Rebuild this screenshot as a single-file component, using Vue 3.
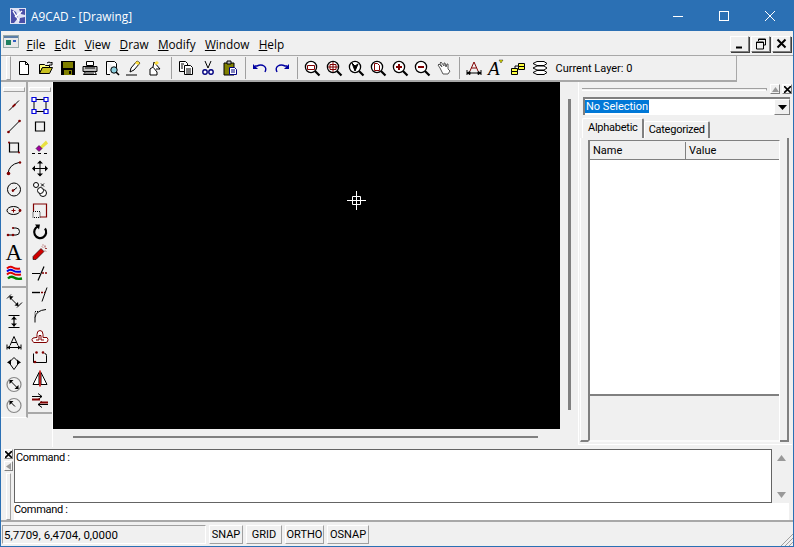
<script setup>
const R = '#800000'
const mag = (x = 7, y = 7) => `<circle cx="${x}" cy="${y}" r="5.6" fill="#fff" stroke="#000" stroke-width="1.3"/><path d="M${x + 4} ${y + 4}l4.5 4.5" stroke="#000" stroke-width="2.2"/>`

const topIcons = [
  [`<path d="M3.5 1.5h6l3 3v10h-9z" fill="#fff" stroke="#000"/><path d="M9.5 1.5v3h3" fill="none" stroke="#000"/>`, `<path d="M1.5 13.5v-9h5l1 1h4v2h-7z" fill="#ffff80" stroke="#000"/><path d="M1.5 13.5l3-6h10l-3 6z" fill="#c8c020" stroke="#000"/><path d="M9 3q2-2 4 0l1-1v3h-3" fill="none" stroke="#000"/>`, `<path d="M1 1h14v14H1z" fill="#000"/><path d="M3 2h10v6H3z" fill="#808000"/><path d="M4 10h8v5H4z" fill="#808000"/><path d="M9 11h2v3H9z" fill="#000"/>`, `<path d="M4.5 1.5h7v4h-7z" fill="#fff" stroke="#000"/><path d="M1 6.5h14v5H1z" fill="#c0c0c0" stroke="#000"/><path d="M3.5 11.5h9l2 3h-13z" fill="#fff" stroke="#000"/><path d="M3 8h10M3 13h9" stroke="#000"/>`, `<path d="M2.5 1.5h8l2 2v5M6 14.5H2.5v-13" fill="#fff" stroke="#000"/><circle cx="10" cy="10" r="3.2" fill="#8cd0e0" stroke="#000"/><path d="M12 12l3 3" stroke="#000" stroke-width="1.6"/>`, `<path d="M0 15h11" stroke="#000"/><path d="M4 12l1-4 6-7 3 2-6 7z" fill="#fff" stroke="#000"/><path d="M9 3l3 2 2-2-3-2z" fill="#ffe040"/>`, `<path d="M2 15V9l3-2 4 5v3z" fill="#fff" stroke="#000"/><path d="M5 7l1-5 6 7-4 0" fill="#fff" stroke="#000"/><path d="M6 3l3-2 2 2-3 2z" fill="#ffe040"/>`],
  [`<path d="M1.5 1.5h6l2 2v8h-8z" fill="#fff" stroke="#000"/><path d="M6.5 5.5h6l2 2v7h-8z" fill="#fff" stroke="#000"/><path d="M3 4h3M3 6h2M3 8h2M8 9h5M8 11h5M8 13h5" stroke="#000"/>`, `<path d="M5 1l3 7M11 1L8 8" stroke="#000"/><circle cx="5" cy="12" r="2.2" fill="#fff" stroke="#000080" stroke-width="1.4"/><circle cx="11" cy="12" r="2.2" fill="#fff" stroke="#000080" stroke-width="1.4"/>`, `<path d="M2 3h10v12H2z" fill="#808000" stroke="#000"/><path d="M5 1h4v3H5z" fill="#c0c0c0" stroke="#000"/><path d="M7.5 7.5h5l2 2v5h-7z" fill="#fff" stroke="#000080"/><path d="M9 10h4M9 12h4" stroke="#000080"/>`],
  [`<path d="M3 6h2q4-2 7 0t1 6" fill="none" stroke="#0000a0" stroke-width="1.4"/><path d="M1 4v5h5z" fill="#0000a0"/>`, `<path d="M13 6h-2q-4-2-7 0t-1 6" fill="none" stroke="#0000a0" stroke-width="1.4"/><path d="M15 4v5h-5z" fill="#0000a0"/>`],
  [mag() + `<path d="M3.5 5.5h7v4h-7z" fill="none" stroke="${R}"/>`, mag() + `<path d="M7 2v10M2 7h10M4 4.5h6v5H4z" fill="none" stroke="${R}"/>`, mag() + `<path d="M4 3l3 8 3-7-3 2z" fill="#000" stroke="#000"/>`, mag() + `<path d="M4.5 3.5h3l2 2v5h-5z" fill="#fff" stroke="${R}"/>`, mag() + `<path d="M4 7h6M7 4v6" stroke="${R}" stroke-width="2"/>`, mag() + `<path d="M4 7h6" stroke="${R}" stroke-width="2"/>`, `<path d="M4 8L2 5l1-1 3 3-2-4 1-1 3 4V3l1 0 1 4 1-3 1 0 0 5 2 2-2 3H7z" fill="#fff" stroke="#555"/>`],
  [`<path d="M4 11L8 2l4 9M5.5 8h5" fill="none" stroke="${R}"/><path d="M1 10v5M15 10v5M1 13h14M1 13l3-1.5v3zM15 13l-3-1.5v3z" fill="#000" stroke="#000"/>`, `<text x="0" y="15" font-family="Liberation Serif" font-size="19" font-style="italic" fill="#000">A</text><path d="M11 0l4 0-2 3z" fill="#e0e000" stroke="#000" stroke-width=".4"/>`, `<path d="M1.5 8.5h6v3h-6zM1.5 11.5h6v3h-6zM8.5 3.5h6v3h-6zM8.5 6.5h6v3h-6z" fill="#ffff40" stroke="#000"/><path d="M5 8V6h3" fill="none" stroke="#000"/>`, `<path d="M1 3.5l4-2h7l3 2-3 2H5zM1 8l4-2h7l3 2-3 2H5zM1 12.5l4-2h7l3 2-3 2H5z" fill="#fff" stroke="#000"/>`]
]

const leftA = [
  `<path d="M3 13L13 3" stroke="#000"/><path d="M6 7h4v2H6z" transform="rotate(-45 8 8)" fill="${R}"/>`,
  `<path d="M2 14L14 2" stroke="#000"/><circle cx="2.5" cy="13.5" r="1.3" fill="${R}"/><circle cx="13.5" cy="2.5" r="1.3" fill="${R}"/>`,
  `<path d="M3.5 3.5h9v9h-9z" fill="none" stroke="#000" stroke-width="1.2"/><circle cx="3" cy="3" r="1" fill="${R}"/><circle cx="13" cy="13" r="1" fill="${R}"/>`,
  `<path d="M2 13Q3 4 13 2" fill="none" stroke="#000"/><circle cx="2.5" cy="13" r="1.8" fill="${R}"/><circle cx="14" cy="2" r="1.2" fill="${R}"/>`,
  `<circle cx="8" cy="8" r="6.5" fill="none" stroke="#000"/><path d="M6 10l5-4" stroke="#000"/><circle cx="7" cy="9" r="1.3" fill="${R}"/>`,
  `<ellipse cx="7.5" cy="8" rx="6.5" ry="4" fill="none" stroke="#000"/><path d="M7.5 6v4M5.5 8h4" stroke="${R}"/><circle cx="14" cy="8" r="1.4" fill="${R}"/>`,
  `<path d="M2 11.5h8a3.5 3.5 0 0 0 0-7H7" fill="none" stroke="#000"/><circle cx="2" cy="11.5" r="1.3" fill="${R}"/><circle cx="7" cy="11.5" r="1.3" fill="${R}"/><circle cx="7" cy="4.5" r="1.1" fill="${R}"/>`,
  `<text x="-0.5" y="15" font-family="Liberation Serif" font-size="23" fill="#000">A</text>`,
  `<path d="M1 3q3-3 6-1t7 1" fill="none" stroke="#e00000" stroke-width="2"/><path d="M1 6q3-3 6-1t8 1" fill="none" stroke="#0000e0" stroke-width="2"/><path d="M1 9q3-3 6-1t8 1" fill="none" stroke="#e00000" stroke-width="2"/><path d="M2 13q3-3 6-1t8 1" fill="none" stroke="#008000" stroke-width="2.4"/>`
]
const leftB = [
  `<path d="M1 6l4-4M11 15l5-5M4 5l8 8" stroke="#000"/><path d="M3.5 3.5l4 .5-3.5 3.5zM12.5 13.5l-4-.5 3.5-3.5z" fill="#000"/>`,
  `<path d="M2.5 2h11M2.5 14h11M8 3v10" stroke="#000" stroke-width="1.2"/><path d="M8 3l-3 3h6zM8 13l-3-3h6z" fill="#000"/>`,
  `<path d="M4 11L8 2l4 9M5.5 8h5" fill="none" stroke="#000"/><path d="M1 10v5M15 10v5M1 13h14" stroke="#000"/><path d="M1 13l3-2v4zM15 13l-3-2v4z" fill="#000"/>`,
  `<path d="M8 2L3 7l5 7 5-7z" fill="none" stroke="#000"/><path d="M1 7l4-3v5zM15 7l-4-3v5z" fill="#000"/>`,
  `<circle cx="8" cy="8" r="7" fill="none" stroke="#888" stroke-width="1.2"/><path d="M4 4l8 8" stroke="#000"/><path d="M3.5 3.5h4l-4 4zM12.5 12.5h-4l4-4z" fill="#000"/>`,
  `<circle cx="8" cy="8" r="7" fill="none" stroke="#888" stroke-width="1.2"/><path d="M4 4l5 5" stroke="#000"/><path d="M3.5 3.5h4l-4 4z" fill="#000"/>`
]
const rightCol = [
  `<path d="M2 2h12v12H2z" fill="none" stroke="#000"/><path d="M0 0h4v4H0zM12 0h4v4h-4zM0 12h4v4H0zM12 12h4v4h-4z" fill="#fff" stroke="#0000e0" stroke-width="1.2"/>`,
  `<path d="M3.5 3.5h9v9h-9z" fill="none" stroke="#000" stroke-width="1.2"/>`,
  `<path d="M7 8l7-7 2 3-7 6z" fill="#e8e040"/><path d="M4 9l3-3 3 3-3 3z" fill="#a000a0" stroke="#000" stroke-width=".5"/><path d="M0 14h3M6 14h3M12 14h3" stroke="#000"/>`,
  `<path d="M8 1v14M1 8h14" stroke="#000"/><path d="M8 0l-3 3h6zM8 16l-3-3h6zM0 8l3-3v6zM16 8l-3-3v6z" fill="#000"/>`,
  `<circle cx="4" cy="3.5" r="2.5" fill="#fff" stroke="#000"/><circle cx="11" cy="11.5" r="3.5" fill="#fff" stroke="#000"/><circle cx="8.5" cy="9" r="3" fill="#fff" stroke="#000"/><path d="M9 2l3 3M12 2L9 5" stroke="#000"/>`,
  `<path d="M1.5 9V1.5h13v13H8" fill="none" stroke="${R}" stroke-width="1.2"/><path d="M1 9h7v6H1z" fill="none" stroke="#000" stroke-dasharray="1 1"/>`,
  `<path d="M13 5a6 6 0 1 1-7-2" fill="none" stroke="#000" stroke-width="2.2"/><path d="M3 1l5 0-1 5z" fill="#000"/>`,
  `<path d="M1 15l0-3 8-8 3 3-8 8z" fill="#d00000" stroke="#000" stroke-width=".6"/><path d="M10 2l1 1M13 1v2M15 4h-2M14 7l-1-1M11 0v1" stroke="#a04040"/>`,
  `<path d="M0 8h8M12 1L6 15" stroke="#000" stroke-width="1.2"/><path d="M10 7.5h6" stroke="${R}" stroke-width="1.5" stroke-dasharray="2 1"/>`,
  `<path d="M0 6h8" stroke="#000" stroke-width="1.4"/><path d="M9 6h4" stroke="${R}" stroke-width="1.5" stroke-dasharray="2 1"/><path d="M15 1l-5 14" stroke="#000"/>`,
  `<path d="M3 15v-5Q4 3 14 2" fill="none" stroke="#000"/><path d="M3 10V4h3" fill="none" stroke="#000" stroke-dasharray="1 1"/>`,
  `<path d="M2 14h12q2 0 2-3t-4-2h-1V6q0-4-3-4t-3 4v3H4q-4 0-4 2t2 3z" fill="#fff" stroke="${R}"/><path d="M4 11.5h3V7h2v4.5h3" fill="none" stroke="${R}"/>`,
  `<path d="M1.5 4v9h13V6a2 2 0 0 0-2-2" fill="none" stroke="#000"/><circle cx="4.5" cy="3" r="1.3" fill="${R}"/><circle cx="11" cy="3" r="1.3" fill="${R}"/><circle cx="3" cy="12.5" r="1.3" fill="${R}"/>`,
  `<path d="M7 2L1 14h6zM9 2l6 12H9z" fill="#fff" stroke="#000"/><path d="M8 0v16" stroke="#c00000" stroke-width="1.6"/>`,
  `<path d="M0 5h10M6 2l4 3-4 3" fill="none" stroke="#000"/><path d="M0 8h8" stroke="${R}" stroke-width="2"/><path d="M6 13h10M10 10l-4 3 4 3" fill="none" stroke="#000"/><path d="M8 11h8" stroke="${R}" stroke-width="2"/>`
]

const menus = [
  ['F', 'ile'], ['E', 'dit'], ['V', 'iew'], ['D', 'raw'], ['M', 'odify'], ['W', 'indow'], ['H', 'elp']
]
const statusButtons = ['SNAP', 'GRID', 'ORTHO', 'OSNAP']
</script>

<template>
  <div class="window">
    <header class="titlebar">
      <svg class="app-icon" viewBox="0 0 16 16" width="16" height="16">
        <rect width="16" height="16" fill="#dfe3f4" />
        <path d="M1 1l5 3 2 6-4 5H1zM9 1h6v6l-4-1zM10 10l5-1v6H9z" fill="#4a4fa8" />
        <path d="M3 3l6 10M12 3L5 9" stroke="#fff" stroke-width="1.4" />
      </svg>
      <span class="title-text">A9CAD - [Drawing]</span>
      <div class="win-controls">
        <svg width="46" height="30" viewBox="0 0 46 30"><path d="M18 15.5h10" stroke="#fff" /></svg>
        <svg width="46" height="30" viewBox="0 0 46 30"><rect x="18.5" y="10.5" width="9" height="9" fill="none" stroke="#fff" /></svg>
        <svg width="46" height="30" viewBox="0 0 46 30"><path d="M18 10l10 10M28 10L18 20" stroke="#fff" /></svg>
      </div>
    </header>

    <nav class="menubar">
      <svg class="doc-icon" viewBox="0 0 16 13" width="16" height="13">
        <rect x=".5" y=".5" width="15" height="12" fill="#e8e8e8" stroke="#9aa" />
        <rect x="1" y="1" width="14" height="2" fill="#5c7fa8" />
        <rect x="3" y="5" width="5" height="5" fill="#208060" />
        <rect x="10" y="5" width="3" height="2" fill="#3060c0" />
      </svg>
      <span v-for="m in menus" :key="m[0]" class="menu-item"><u>{{ m[0] }}</u>{{ m[1] }}</span>
      <div class="mdi-buttons">
        <button class="mdi-btn"><svg width="10" height="10" viewBox="0 0 10 10"><path d="M1 8.5h6" stroke="#000" stroke-width="2" /></svg></button>
        <button class="mdi-btn"><svg width="12" height="12" viewBox="0 0 12 12"><path d="M3.5 3V1h7v6H8.5M1.5 4h7v7h-7z" fill="none" stroke="#000" /><path d="M3 1.5h8M1 4.5h8" stroke="#000" /></svg></button>
        <button class="mdi-btn"><svg width="11" height="11" viewBox="0 0 11 11"><path d="M1.5 1.5l8 8M9.5 1.5l-8 8" stroke="#000" stroke-width="2" /></svg></button>
      </div>
    </nav>

    <div class="toolbar">
      <span class="grip-v"></span>
      <template v-for="(group, i) in topIcons" :key="i">
        <span v-if="i > 0" class="tb-sep"></span>
        <svg v-for="(icon, j) in group" :key="j" class="tb-icon" viewBox="0 0 16 16" width="16" height="16" v-html="icon"></svg>
      </template>
      <span class="layer-label">Current Layer: 0</span>
    </div>

    <div class="workspace">
      <aside class="side-a">
        <div class="grip-h"></div>
        <div class="side-list">
          <svg v-for="(icon, i) in leftA" :key="i" class="side-icon" viewBox="0 0 16 16" width="16" height="16" v-html="icon"></svg>
          <span class="side-sep"></span>
          <svg v-for="(icon, i) in leftB" :key="i" class="side-icon" viewBox="0 0 16 16" width="16" height="16" v-html="icon"></svg>
        </div>
      </aside>
      <aside class="side-b">
        <div class="grip-h"></div>
        <div class="side-list">
          <svg v-for="(icon, i) in rightCol" :key="i" class="side-icon" viewBox="0 0 16 16" width="16" height="16" v-html="icon"></svg>
          <span class="side-sep"></span>
        </div>
      </aside>

      <section class="view">
        <div class="view-top">
          <div class="canvas">
            <svg class="crosshair" width="19" height="19" viewBox="0 0 19 19">
              <path d="M9.5 0v19M0 9.5h19M5.5 5.5h8v8h-8z" fill="none" stroke="#fff" />
            </svg>
          </div>
          <div class="vscroll"><span class="vthumb"></span></div>
        </div>
        <div class="hscroll"><span class="hthumb"></span></div>
      </section>

      <aside class="props">
        <div class="props-head">
          <span class="props-grip"></span>
          <button class="mini-btn"><svg width="7" height="5" viewBox="0 0 7 5"><path d="M3.5 0L7 5H0z" fill="#999" /></svg></button>
          <button class="mini-btn"><svg width="7" height="7" viewBox="0 0 7 7"><path d="M0 0l7 7M7 0L0 7" stroke="#000" stroke-width="1.6" /></svg></button>
        </div>
        <div class="combo">
          <span class="combo-value">No Selection</span>
          <button class="combo-btn"><svg width="9" height="5" viewBox="0 0 9 5"><path d="M0 0h9L4.5 5z" fill="#000" /></svg></button>
        </div>
        <div class="tabs">
          <span class="tab active">Alphabetic</span>
          <span class="tab">Categorized</span>
        </div>
        <div class="tab-page">
          <div class="prop-grid">
            <div class="prop-header">
              <span class="col-name">Name</span>
              <span class="col-value">Value</span>
            </div>
            <div class="prop-body"></div>
            <div class="prop-desc"></div>
          </div>
        </div>
      </aside>
    </div>

    <section class="command">
      <div class="cmd-side">
        <button class="cmd-btn"><svg width="7" height="7" viewBox="0 0 7 7"><path d="M0 0l7 7M7 0L0 7" stroke="#000" stroke-width="1.6" /></svg></button>
        <button class="cmd-btn"><svg width="5" height="7" viewBox="0 0 5 7"><path d="M0 3.5L5 0v7z" fill="#999" /></svg></button>
        <span class="cmd-grip"></span>
      </div>
      <div class="cmd-main">
        <div class="cmd-top">
          <div class="cmd-log">Command :</div>
          <div class="cmd-scroll">
            <svg width="9" height="6" viewBox="0 0 9 6"><path d="M4.5 0L9 6H0z" fill="#999" /></svg>
            <svg width="9" height="6" viewBox="0 0 9 6"><path d="M0 0h9L4.5 6z" fill="#999" /></svg>
          </div>
        </div>
        <div class="cmd-input">Command :</div>
      </div>
    </section>

    <footer class="statusbar">
      <div class="coords">5,7709, 6,4704, 0,0000</div>
      <button v-for="b in statusButtons" :key="b" class="status-btn" :class="'btn-' + b.toLowerCase()">{{ b }}</button>
      <svg class="resize" width="13" height="13" viewBox="0 0 13 13">
        <path d="M13 1L1 13M13 5L5 13M13 9l-4 4" stroke="#a0a0a0" />
      </svg>
    </footer>
  </div>
</template>

<style>
html, body {
  margin: 0;
  background: #f0f0f0;
}
</style>

<style scoped>
.window {
  width: 794px;
  height: 547px;
  box-sizing: border-box;
  display: flex;
  flex-direction: column;
  overflow: hidden;
  border: 1px solid #2b70b4;
  border-top: 0;
  background: #f0f0f0;
  font-family: Roboto, "Liberation Sans", sans-serif;
  font-size: 11px;
  color: #000;
}

button {
  padding: 0;
  font: inherit;
  color: inherit;
}

.titlebar {
  height: 31px;
  flex: none;
  margin: 0 -1px;
  display: flex;
  align-items: center;
  background: #2b70b4;
  color: #fff;
}

.app-icon {
  margin-left: 10px;
  margin-right: 5px;
}

.title-text {
  font-family: "Open Sans", sans-serif;
  font-size: 11.8px;
}

.win-controls {
  margin-left: auto;
  margin-right: 1px;
  display: flex;
}

.menubar {
  height: 25px;
  flex: none;
  display: flex;
  align-items: center;
  box-sizing: border-box;
  border-bottom: 1px solid #a8a8a8;
  padding-left: 2px;
  font-family: "Open Sans", sans-serif;
  font-size: 11.8px;
}

.doc-icon {
  margin-right: 3px;
  margin-top: -3px;
}

.menu-item {
  padding: 0 4.6px;
  margin-top: 2px;
}

.mdi-buttons {
  margin-left: auto;
  margin-right: 2px;
  margin-top: 1px;
  display: flex;
  gap: 2px;
}

.mdi-btn {
  width: 19px;
  height: 16px;
  display: flex;
  align-items: center;
  justify-content: center;
  background: #f0f0f0;
  border: 1px solid;
  border-color: #fff #808080 #808080 #fff;
  box-shadow: 1px 1px 0 #404040;
}

.toolbar {
  width: 736px;
  height: 26px;
  flex: none;
  box-sizing: border-box;
  display: flex;
  align-items: center;
  border-right: 1px solid #a8a8a8;
  border-bottom: 2px solid #a8a8a8;
  padding-left: 5px;
}

.grip-v {
  width: 3px;
  height: 22px;
  margin-right: 1.5px;
  border: 1px solid;
  border-color: #fff #a0a0a0 #a0a0a0 #fff;
}

.tb-icon {
  width: 16px;
  flex: none;
  margin: 0 3px;
  overflow: visible;
}

.tb-sep {
  width: 1px;
  height: 22px;
  flex: none;
  margin: 0 3px 0 4px;
  background: #a0a0a0;
}

.layer-label {
  margin: 1px 0 0 5px;
  font-size: 11px;
}

.workspace {
  height: 365px;
  flex: none;
  display: flex;
}

.side-a {
  width: 27px;
  height: 336px;
  flex: none;
  box-sizing: border-box;
  border-right: 2px solid #a8a8a8;
  border-bottom: 1px solid #fff;
  padding-left: 1px;
}

.side-b {
  width: 25px;
  flex: none;
  box-sizing: border-box;
  border-right: 1px solid #fff;
}

.grip-h {
  height: 3px;
  margin: 5px 1px 0;
  border: 1px solid;
  border-color: #fff #a0a0a0 #a0a0a0 #fff;
}

.side-list {
  display: flex;
  flex-direction: column;
  align-items: center;
  padding-top: 3px;
}

.side-icon {
  height: 21px;
  flex: none;
  padding: 2.5px 0;
  box-sizing: border-box;
  overflow: visible;
}

.side-sep {
  width: 100%;
  height: 2px;
  margin: 2px 0;
  background: #a8a8a8;
}

.view {
  width: 525px;
  flex: none;
  display: flex;
  flex-direction: column;
}

.view-top {
  display: flex;
  height: 347px;
}

.canvas {
  position: relative;
  width: 507px;
  background: #000;
}

.crosshair {
  position: absolute;
  left: 294px;
  top: 109px;
}

.vscroll {
  flex: 1;
  display: flex;
  justify-content: center;
  padding-top: 17px;
}

.vthumb {
  width: 3px;
  height: 311px;
  background: #808080;
}

.hscroll {
  height: 18px;
  padding: 7px 0 0 20px;
  box-sizing: border-box;
}

.hthumb {
  display: block;
  width: 465px;
  height: 2px;
  background: #808080;
}

.props {
  width: 214px;
  height: 363px;
  flex: none;
  box-sizing: border-box;
  border-left: 1px solid #fff;
  border-bottom: 1px solid #fff;
  padding-left: 3px;
}

.props-head {
  height: 14px;
  display: flex;
  align-items: center;
  gap: 2px;
}

.props-grip {
  flex: 1;
  height: 1px;
  margin-right: 1px;
  border-top: 1px solid #a0a0a0;
  border-right: 1px solid #a0a0a0;
  border-bottom: 1px solid #fff;
}

.mini-btn {
  width: 10px;
  height: 10px;
  display: flex;
  align-items: center;
  justify-content: center;
  background: #f0f0f0;
  border: 1px solid;
  border-color: #fff #808080 #808080 #fff;
}

.combo {
  width: 207px;
  height: 18px;
  box-sizing: border-box;
  margin: 1px 0 0 1px;
  display: flex;
  align-items: center;
  background: #fff;
  border-top: 2px solid #808080;
  border-left: 2px solid #808080;
  font-size: 11px;
}

.combo-value {
  padding: 0 1px;
  margin-bottom: 2px;
  line-height: 13px;
  background: #0078d7;
  color: #fff;
}

.combo-btn {
  width: 16px;
  height: 100%;
  margin-left: auto;
  display: flex;
  align-items: center;
  justify-content: center;
  background: #f0f0f0;
  border: 1px solid;
  border-color: #fff #808080 #808080 #fff;
}

.tabs {
  height: 20px;
  margin-top: 3px;
  display: flex;
  align-items: flex-end;
  letter-spacing: -0.25px;
}

.tab {
  height: 17px;
  box-sizing: border-box;
  padding: 1px 3px 0 4px;
  background: #f0f0f0;
  border-top: 1px solid #fff;
  border-left: 1px solid #fff;
  border-right: 2px solid #808080;
  border-radius: 2px 2px 0 0;
}

.tab.active {
  height: 20px;
  padding: 2px 4px 0 5px;
}

.tab-page {
  width: 209px;
  height: 304px;
  box-sizing: border-box;
  margin-left: -2px;
  border-left: 1px solid #fff;
  border-right: 2px solid #808080;
  border-bottom: 2px solid #808080;
  padding: 2px 0 0 7px;
}

.prop-grid {
  height: 302px;
  width: 192px;
  display: flex;
  flex-direction: column;
  border-left: 2px solid #808080;
  border-top: 1px solid #808080;
  border-right: 1px solid #fff;
  border-bottom: 2px solid #fafafa;
  box-sizing: border-box;
}

.prop-header {
  height: 19px;
  flex: none;
  display: flex;
  align-items: center;
  box-sizing: border-box;
  border-bottom: 1px solid #808080;
  padding-top: 1px;
}

.col-name {
  width: 96px;
  box-sizing: border-box;
  padding-left: 3px;
  line-height: 17px;
  border-right: 1px solid #808080;
}

.col-value {
  padding-left: 3px;
}

.prop-body {
  height: 234px;
  flex: none;
  background: #fff;
  border-bottom: 2px solid #808080;
}

.prop-desc {
  flex: 1;
}

.command {
  height: 75px;
  flex: none;
  display: flex;
  box-sizing: border-box;
  border-bottom: 2px solid #a8a8a8;
  padding-top: 2px;
}

.cmd-side {
  width: 13px;
  flex: none;
  box-sizing: border-box;
  display: flex;
  flex-direction: column;
  align-items: center;
  padding-left: 2px;
}

.cmd-btn {
  width: 9px;
  height: 10px;
  margin-bottom: 2px;
  display: flex;
  align-items: center;
  justify-content: center;
  background: #f0f0f0;
  border: 1px solid;
  border-color: #fff #808080 #808080 #fff;
}

.cmd-grip {
  width: 3px;
  flex: 1;
  border: 1px solid;
  border-color: #fff #a0a0a0 #a0a0a0 #fff;
}

.cmd-main {
  flex: 1;
  display: flex;
  flex-direction: column;
  min-width: 0;
  font-size: 11px;
  letter-spacing: -0.3px;
}

.cmd-top {
  height: 54px;
  display: flex;
}

.cmd-log {
  width: 758px;
  box-sizing: border-box;
  background: #fff;
  border: 1px solid #646464;
  padding: 1px 0 0 1px;
}

.cmd-scroll {
  flex: 1;
  display: flex;
  flex-direction: column;
  align-items: center;
  justify-content: space-between;
  padding: 6px 0 5px;
  margin-right: 2px;
}

.cmd-input {
  height: 17px;
  margin-right: 4px;
  background: #fff;
  line-height: 14px;
}

.statusbar {
  flex: 1;
  position: relative;
  display: flex;
  align-items: center;
  padding-left: 1px;
  font-size: 11.5px;
}

.coords {
  width: 204px;
  height: 19px;
  box-sizing: border-box;
  margin-right: 3px;
  padding-left: 1px;
  line-height: 18px;
  border: 1px solid;
  border-color: #a0a0a0 #fff #fff #a0a0a0;
}

.status-btn {
  height: 19px;
  margin-right: 3px;
  background: #f0f0f0;
  border: 1px solid;
  border-color: #fff #a0a0a0 #a0a0a0 #fff;
  font-size: 11px;
}

.btn-snap { width: 34px; }
.btn-grid { width: 36px; }
.btn-ortho { width: 39px; }
.btn-osnap { width: 42px; }

.resize {
  position: absolute;
  right: 0;
  bottom: 0;
}
</style>
